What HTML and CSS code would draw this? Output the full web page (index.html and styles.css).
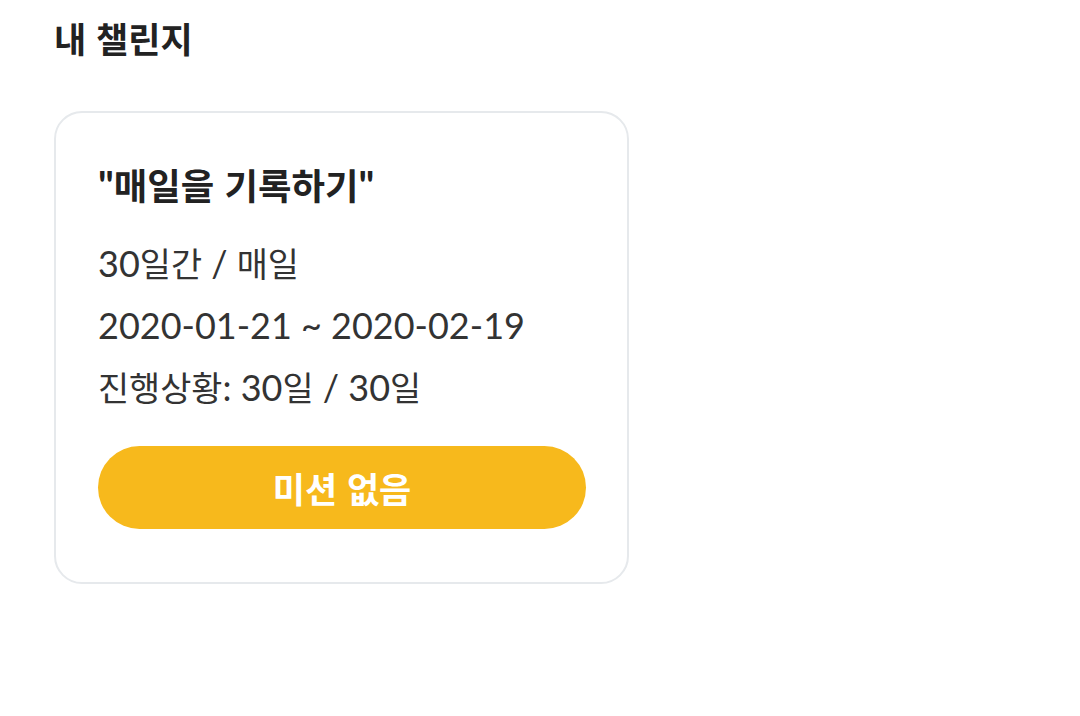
FILE: index.html
```html
<!DOCTYPE html>
<html lang="ko">
<head>
<meta charset="utf-8">
<link rel="stylesheet" href="styles.css">
</head>
<body>
<main class="page">
  <h1 class="page-title">내 챌린지</h1>
  <section class="card">
    <h2 class="card-title">"<span class="ko">매일을 기록하기</span>"</h2>
    <p class="info">30<span class="ko">일간</span> / <span class="ko">매일</span></p>
    <p class="info">2020-01-21 ~ 2020-02-19</p>
    <p class="info"><span class="ko">진행상황</span>: 30<span class="ko">일</span> / 30<span class="ko">일</span></p>
    <button class="mission-btn" type="button">미션 없음</button>
  </section>
</main>
</body>
</html>
```
FILE: styles.css
```css
html, body {
  margin: 0;
  padding: 0;
  background: #ffffff;
}
body {
  font-family: Lato, "Noto Sans CJK KR", sans-serif;
  color: #333333;
}
.page {
  padding: 12px 0 0 54px;
}
.page-title {
  margin: 0;
  font-family: "Noto Sans CJK KR", sans-serif;
  font-size: 35px;
  font-weight: 700;
  line-height: 52px;
  color: #222222;
}
.card {
  margin-top: 47px;
  width: 575px;
  box-sizing: border-box;
  border: 2px solid #e6e9ec;
  border-radius: 28px;
  padding: 45px 41px 53px 42px;
  display: flex;
  flex-direction: column;
}
.card-title {
  margin: 0 0 21px;
  font-size: 40px;
  font-weight: 700;
  line-height: 52px;
  color: #222222;
}
.card-title .ko {
  font-size: 0.91em;
}
.ko {
  font-family: "Noto Sans CJK KR", sans-serif;
  font-size: 0.94em;
}
.info {
  margin: 0;
  font-size: 36px;
  line-height: 62px;
  color: #333333;
}
.mission-btn {
  margin-top: 28px;
  height: 83px;
  width: 100%;
  border: none;
  border-radius: 42px;
  background: #f7b91c;
  color: #ffffff;
  font-family: "Noto Sans CJK KR", sans-serif;
  font-size: 35px;
  font-weight: 700;
  padding: 0;
}
```
